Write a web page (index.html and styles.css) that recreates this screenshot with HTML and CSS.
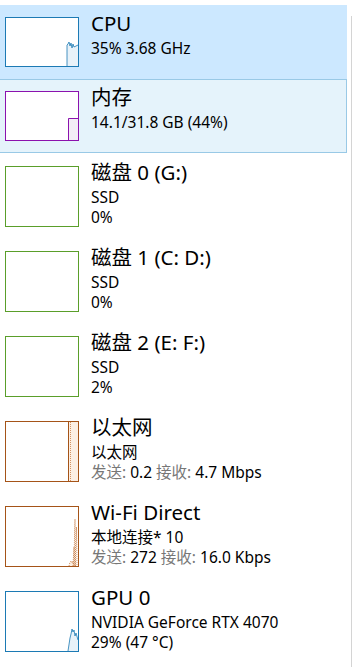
FILE: index.html
```html
<!DOCTYPE html>
<html lang="zh-CN">
<head>
    <meta charset="UTF-8">
    <meta name="viewport" content="width=device-width, initial-scale=1.0">
    <title>性能</title>
    <link rel="stylesheet" href="styles.css">
</head>
<body>
    <div class="sidebar">
        <ul class="list">
            <li class="item selected">
                <div class="graph cpu">
                    <svg viewBox="0 0 72 48" width="72" height="48">
                        <polygon class="fill-blue" points="61,48 61,27 62,26 63,24 64,28 65,25 66,30 67,26 68,29 72,27 72,48"/>
                        <polyline class="line-blue" points="61,48 61,27 62,26 63,24 64,28 65,25 66,30 67,26 68,29 72,27"/>
                    </svg>
                </div>
                <div class="info">
                    <div class="title">CPU</div>
                    <div class="sub">35% 3.68 GHz</div>
                </div>
            </li>
            <li class="item hover">
                <div class="graph mem">
                    <svg viewBox="0 0 72 48" width="72" height="48">
                        <rect class="fill-purple" x="62" y="26" width="10" height="22"/>
                        <polyline class="line-purple" points="62.5,48 62.5,26.5 72,26.5"/>
                    </svg>
                </div>
                <div class="info">
                    <div class="title">内存</div>
                    <div class="sub">14.1/31.8 GB (44%)</div>
                </div>
            </li>
            <li class="item tall">
                <div class="graph disk"></div>
                <div class="info">
                    <div class="title">磁盘 0 (G:)</div>
                    <div class="sub">SSD</div>
                    <div class="sub">0%</div>
                </div>
            </li>
            <li class="item tall">
                <div class="graph disk"></div>
                <div class="info">
                    <div class="title">磁盘 1 (C: D:)</div>
                    <div class="sub">SSD</div>
                    <div class="sub">0%</div>
                </div>
            </li>
            <li class="item tall">
                <div class="graph disk"></div>
                <div class="info">
                    <div class="title">磁盘 2 (E: F:)</div>
                    <div class="sub">SSD</div>
                    <div class="sub">2%</div>
                </div>
            </li>
            <li class="item tall">
                <div class="graph net">
                    <svg viewBox="0 0 72 59" width="72" height="59">
                        <rect class="fill-orange" x="62" y="0" width="10" height="59"/>
                        <line class="line-orange" x1="62.5" y1="0" x2="62.5" y2="59"/>
                        <line class="dot-orange" x1="64.5" y1="0" x2="64.5" y2="59"/>
                    </svg>
                </div>
                <div class="info">
                    <div class="title">以太网</div>
                    <div class="sub">以太网</div>
                    <div class="sub"><span class="label">发送:</span> 0.2 <span class="label">接收:</span> 4.7 Mbps</div>
                </div>
            </li>
            <li class="item tall">
                <div class="graph net">
                    <svg viewBox="0 0 72 59" width="72" height="59">
                        <polygon class="fill-orange" points="63,59 64,55 65,54 66,56 67,54 68,59"/>
                        <polyline class="dot-orange" points="63,59 64,55 65,54 66,56 67,54 68,59 68.5,30 69,12 69.5,59"/>
                        <polyline class="dot-orange" points="67,59 68,40 69,59 70.5,20 71,59"/>
                    </svg>
                </div>
                <div class="info">
                    <div class="title">Wi-Fi Direct</div>
                    <div class="sub">本地连接* 10</div>
                    <div class="sub"><span class="label">发送:</span> 272 <span class="label">接收:</span> 16.0 Kbps</div>
                </div>
            </li>
            <li class="item tall">
                <div class="graph gpu">
                    <svg viewBox="0 0 72 59" width="72" height="59">
                        <polygon class="fill-blue" points="62,59 64,46 65,42 66,37 67,40 68,38 69,44 70,41 72,48 72,59"/>
                        <polyline class="line-blue" points="62,59 64,46 65,42 66,37 67,40 68,38 69,44 70,41 72,48"/>
                    </svg>
                </div>
                <div class="info">
                    <div class="title">GPU 0</div>
                    <div class="sub">NVIDIA GeForce RTX 4070</div>
                    <div class="sub">29% (47 °C)</div>
                </div>
            </li>
        </ul>
        <div class="divider"></div>
    </div>
</body>
</html>
```
FILE: styles.css
```css
body {
    margin: 0;
    background: #ffffff;
    font-family: 'Noto Sans', 'Noto Sans CJK SC', sans-serif;
    color: #000000;
}
.sidebar {
    display: flex;
    height: 667px;
    overflow: hidden;
}
.list {
    list-style: none;
    margin: 0;
    padding: 5px 0 0 0;
    width: 347px;
}
.divider {
    width: 1px;
    margin: 16px 0 0 4px;
    background: #d4d4d4;
}
.item {
    display: flex;
    gap: 12px;
    height: 74px;
    padding: 12px 0 0 5px;
    box-sizing: border-box;
    border: 1px solid transparent;
    border-left: none;
}
.item.tall { height: 85px; }
.item.selected {
    background: #cce8ff;
    border-color: #cce8ff;
    padding-top: 11px;
}
.item.hover {
    background: #e5f3fb;
    border-color: #99c9e6;
    padding-top: 11px;
}
.graph {
    flex: none;
    width: 72px;
    height: 48px;
    border: 1px solid;
    background: #ffffff;
}
.graph svg { display: block; }
.item.tall .graph { height: 59px; }
.graph.cpu, .graph.gpu { border-color: #1c7ab4; }
.graph.mem { border-color: #8b12ae; }
.graph.disk { border-color: #5a9e2a; }
.graph.net { border-color: #a55418; }

.fill-blue { fill: #e8f2f9; }
.line-blue { fill: none; stroke: #1c7ab4; stroke-width: 0.8; }
.fill-purple { fill: #f3ecf6; }
.line-purple { fill: none; stroke: #8b12ae; stroke-width: 1; }
.fill-orange { fill: #fcefe3; }
.line-orange { stroke: #a55418; stroke-width: 1; }
.dot-orange { fill: none; stroke: #c77a40; stroke-width: 0.8; stroke-dasharray: 1 1; }

.info {
    margin-top: -8px;
    white-space: nowrap;
}
.title {
    font-size: 20.5px;
    line-height: 29px;
}
.sub {
    font-size: 15.5px;
    line-height: 20px;
}
.label { color: #777777; }
```
